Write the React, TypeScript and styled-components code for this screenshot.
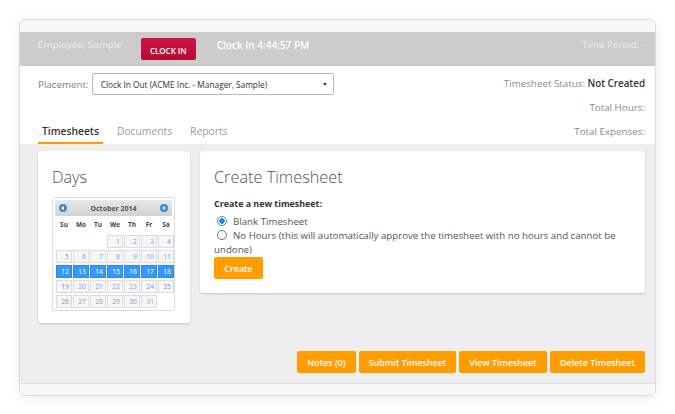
import React from "react";
import styled, { createGlobalStyle } from "styled-components";

const Global = createGlobalStyle`
  html, body { margin: 0; padding: 0; background: #fff; }
  body { font-family: "Open Sans", "Liberation Sans", sans-serif; }
  * { box-sizing: border-box; }
`;

const Page = styled.div`
  padding: 19px 19px 0 19px;
  width: 675px;
  height: 414px;
`;

const Card = styled.div`
  width: 637px;
  height: 377px;
  border: 1px solid #dcdcdc;
  border-radius: 6px;
  background: #f7f7f7;
  box-shadow: 0 2px 12px rgba(0, 0, 0, 0.08);
  display: flex;
  flex-direction: column;
  overflow: hidden;
`;

const TopStrip = styled.div`
  height: 12px;
  background: #f7f7f7;
`;

const Header = styled.div`
  height: 34px;
  background: #cccccc;
  display: flex;
  align-items: flex-start;
  padding: 5px 10px 0 18px;
  font-size: 9.8px;
  color: #ededed;
`;

const HeaderText = styled.span<{ $bold?: boolean }>`
  line-height: 16px;
  font-weight: ${(p) => (p.$bold ? 600 : 400)};
  color: ${(p) => (p.$bold ? "#fff" : "#ececec")};
  font-size: ${(p) => (p.$bold ? "10px" : "9.8px")};
`;

const ClockInButton = styled.button`
  margin: 1px 21px 0 19px;
  width: 55px;
  height: 22px;
  border: none;
  border-radius: 2px;
  background: linear-gradient(#cf1447, #b70a33);
  color: #fff;
  font-family: inherit;
  font-size: 8px;
  font-weight: 600;
  padding: 3px 0 0;
`;

const Spacer = styled.div`
  flex: 1;
`;

const Info = styled.div`
  height: 78px;
  background: #fff;
  display: flex;
  justify-content: space-between;
  padding: 6px 10px 0 18px;
  font-size: 9.8px;
  color: #808080;
`;

const LeftCol = styled.div`
  display: flex;
  flex-direction: column;
  justify-content: space-between;
`;

const PlacementRow = styled.div`
  display: flex;
  align-items: center;
  height: 24px;
  gap: 3px;
`;

const Select = styled.div`
  width: 242px;
  height: 22px;
  border: 1px solid #b9b9b9;
  border-radius: 2px;
  display: flex;
  align-items: center;
  padding: 0 6px 0 8px;
  font-size: 8.3px;
  color: #333;
  justify-content: space-between;
`;

const Caret = styled.span`
  width: 0;
  height: 0;
  border-left: 2.5px solid transparent;
  border-right: 2.5px solid transparent;
  border-top: 3px solid #444;
`;

const Tabs = styled.div`
  display: flex;
  height: 24px;
  gap: 10px;
`;

const Tab = styled.div<{ $active?: boolean }>`
  padding: 0 4px;
  line-height: 22px;
  font-size: 10.3px;
  color: ${(p) => (p.$active ? "#333" : "#9a9a9a")};
  font-weight: ${(p) => (p.$active ? 600 : 400)};
  border-bottom: ${(p) => (p.$active ? "2px solid #ff9900" : "2px solid transparent")};
`;

const RightCol = styled.div`
  display: flex;
  flex-direction: column;
  align-items: flex-end;
`;

const InfoLine = styled.div`
  height: 24px;
  line-height: 24px;
  color: #8a8a8a;
`;

const Strong = styled.span`
  color: #333;
  font-weight: 600;
`;

const Content = styled.div`
  flex: 1;
  background: #eeeeee;
  padding: 7px 10px 10px 18px;
  display: flex;
  flex-direction: column;
  border-bottom: 1px solid #dcdcdc;
`;

const CardsRow = styled.div`
  display: flex;
  align-items: flex-start;
  gap: 10px;
`;

const Panel = styled.div<{ $w: number; $h?: number }>`
  width: ${(p) => p.$w}px;
  ${(p) => (p.$h ? `height: ${p.$h}px;` : "")}
  background: #fff;
  border-radius: 3px;
  box-shadow: 0 1px 2px rgba(0, 0, 0, 0.18);
  padding: 14px 14px 14px 14px;
`;

const PanelTitle = styled.div`
  font-size: 16.3px;
  font-weight: 300;
  color: #505050;
  line-height: 24px;
`;

const Calendar = styled.div`
  margin-top: 8px;
  width: 123px;
  border: 1px solid #dddddd;
  border-radius: 2px;
  padding: 2px 2px 2px 2px;
`;

const CalHeader = styled.div`
  height: 16px;
  background: linear-gradient(#e8e8e8, #d2d2d2);
  border-radius: 2px;
  display: flex;
  align-items: center;
  justify-content: space-between;
  padding: 0 4px;
  font-size: 7px;
  font-weight: 700;
  color: #555;
`;

const Arrow = styled.span<{ $dir: "l" | "r" }>`
  width: 8px;
  height: 8px;
  border-radius: 50%;
  background: #2f8fd8;
  position: relative;
  &::after {
    content: "";
    position: absolute;
    top: 2px;
    ${(p) => (p.$dir === "l" ? "left: 2px;" : "left: 3px;")}
    border-top: 2px solid transparent;
    border-bottom: 2px solid transparent;
    ${(p) => (p.$dir === "l" ? "border-right: 3px solid #fff;" : "border-left: 3px solid #fff;")}
  }
`;

const CalGrid = styled.div`
  display: grid;
  grid-template-columns: repeat(7, 16px);
  column-gap: 1px;
  row-gap: 2px;
  padding: 1px 0 0 1px;
`;

const DayName = styled.div`
  height: 16px;
  line-height: 16px;
  text-align: center;
  font-size: 6.5px;
  font-weight: 700;
  color: #444;
`;

const DayCell = styled.div<{ $sel?: boolean; $empty?: boolean; $wk?: boolean }>`
  height: 13px;
  line-height: 12px;
  text-align: right;
  padding-right: 2px;
  font-size: 6.8px;
  border: 1px solid ${(p) => (p.$empty ? "transparent" : p.$sel ? "#2b8ae6" : "#dcdcdc")};
  background: ${(p) => (p.$empty ? "transparent" : p.$sel ? "#3399ff" : "#f6f6f6")};
  color: ${(p) => (p.$sel ? "#fff" : p.$wk ? "#9a87c4" : "#7aa3d6")};
`;

const SubLabel = styled.div`
  margin-top: 8px;
  font-size: 8.9px;
  font-weight: 700;
  color: #333;
  line-height: 14px;
`;

const Options = styled.div`
  margin-top: 4px;
  font-size: 9.7px;
  line-height: 14px;
  color: #555;
`;

const Option = styled.div``;

const Radio = styled.span<{ $on?: boolean }>`
  display: inline-block;
  width: 10px;
  height: 10px;
  border-radius: 50%;
  margin: 0 6px 0 3px;
  vertical-align: -1px;
  border: 1px solid ${(p) => (p.$on ? "#3b8fdc" : "#6f6f6f")};
  background: ${(p) => (p.$on ? "radial-gradient(circle, #2a80d8 0 2.5px, #fff 3px)" : "#fff")};
`;

const OrangeButton = styled.button<{ $w: number }>`
  display: block;
  width: ${(p) => p.$w}px;
  height: 22px;
  border: none;
  border-radius: 2px;
  background: #ff9c00;
  color: #fff;
  font-family: inherit;
  font-size: 8.9px;
  font-weight: 600;
  padding: 0;
`;

const Actions = styled.div`
  margin-top: auto;
  display: flex;
  justify-content: flex-end;
  gap: 3px;
`;

const BottomStrip = styled.div`
  height: 11px;
  background: #f7f7f7;
`;

const days: { d?: number; sel?: boolean; wk?: boolean }[] = [];
for (let i = 0; i < 3; i++) days.push({});
for (let d = 1; d <= 31; d++) {
  const col = (d + 2) % 7;
  days.push({ d, sel: d >= 12 && d <= 18, wk: col === 6 || col === 0 });
}

export default function App() {
  return (
    <>
      <Global />
      <Page>
        <Card>
          <TopStrip />
          <Header>
            <HeaderText>Employee, Sample</HeaderText>
            <ClockInButton>CLOCK IN</ClockInButton>
            <HeaderText $bold>Clock In 4:44:57 PM</HeaderText>
            <Spacer />
            <HeaderText>Time Period: -</HeaderText>
          </Header>
          <Info>
            <LeftCol>
              <PlacementRow>
                <span>Placement:</span>
                <Select>
                  <span>Clock In Out (ACME Inc. - Manager, Sample)</span>
                  <Caret />
                </Select>
              </PlacementRow>
              <Tabs>
                <Tab $active>Timesheets</Tab>
                <Tab>Documents</Tab>
                <Tab>Reports</Tab>
              </Tabs>
            </LeftCol>
            <RightCol>
              <InfoLine>
                Timesheet Status: <Strong>Not Created</Strong>
              </InfoLine>
              <InfoLine>Total Hours:</InfoLine>
              <InfoLine>Total Expenses:</InfoLine>
            </RightCol>
          </Info>
          <Content>
            <CardsRow>
              <Panel $w={152} $h={172}>
                <PanelTitle>Days</PanelTitle>
                <Calendar>
                  <CalHeader>
                    <Arrow $dir="l" />
                    <span>October 2014</span>
                    <Arrow $dir="r" />
                  </CalHeader>
                  <CalGrid>
                    {["Su", "Mo", "Tu", "We", "Th", "Fr", "Sa"].map((n) => (
                      <DayName key={n}>{n}</DayName>
                    ))}
                    {days.map((c, i) => (
                      <DayCell key={i} $empty={!c.d} $sel={c.sel} $wk={c.wk}>
                        {c.d ?? ""}
                      </DayCell>
                    ))}
                  </CalGrid>
                </Calendar>
              </Panel>
              <Panel $w={445}>
                <PanelTitle>Create Timesheet</PanelTitle>
                <SubLabel>Create a new timesheet:</SubLabel>
                <Options>
                  <Option>
                    <Radio $on />
                    Blank Timesheet
                  </Option>
                  <Option>
                    <Radio />
                    No Hours (this will automatically approve the timesheet with no hours and cannot be undone)
                  </Option>
                </Options>
                <OrangeButton $w={49}>Create</OrangeButton>
              </Panel>
            </CardsRow>
            <Actions>
              <OrangeButton $w={59}>Notes (0)</OrangeButton>
              <OrangeButton $w={97}>Submit Timesheet</OrangeButton>
              <OrangeButton $w={88}>View Timesheet</OrangeButton>
              <OrangeButton $w={95}>Delete Timesheet</OrangeButton>
            </Actions>
          </Content>
          <BottomStrip />
        </Card>
      </Page>
    </>
  );
}
